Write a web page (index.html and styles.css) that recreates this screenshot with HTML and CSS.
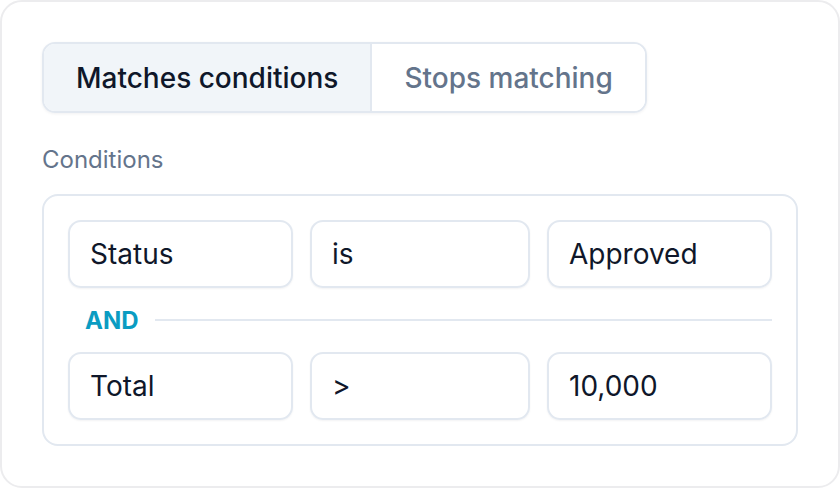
FILE: index.html
```html
<!DOCTYPE html>
<html lang="en">
<head>
    <meta charset="UTF-8">
    <meta name="viewport" content="width=device-width, initial-scale=1.0">
    <title>Trigger Conditions</title>
    <link rel="stylesheet" href="styles.css">
</head>
<body>
    <div class="card">
        <div class="segmented">
            <button class="segment active">Matches conditions</button>
            <button class="segment">Stops matching</button>
        </div>

        <div class="section-label">Conditions</div>

        <div class="conditions">
            <div class="condition-row">
                <div class="field">Status</div>
                <div class="field">is</div>
                <div class="field">Approved</div>
            </div>

            <div class="joiner">
                <span class="joiner-label">AND</span>
                <span class="joiner-line"></span>
            </div>

            <div class="condition-row">
                <div class="field">Total</div>
                <div class="field">&gt;</div>
                <div class="field">10,000</div>
            </div>
        </div>
    </div>
</body>
</html>
```

FILE: styles.css
```css
html, body {
    margin: 0;
    padding: 0;
    background: #ffffff;
}
body {
    font-family: Inter, "Noto Sans", sans-serif;
    color: #0f172a;
}
.card {
    width: 840px;
    height: 488px;
    box-sizing: border-box;
    border: 2px solid #ececee;
    border-radius: 22px;
    padding: 40px;
    background: #ffffff;
}
.segmented {
    display: inline-flex;
    height: 71px;
    box-sizing: border-box;
    border: 2px solid #e2e8f0;
    border-radius: 13px;
    overflow: hidden;
    box-shadow: 0 1px 3px rgba(15, 23, 42, 0.06);
}
.segment {
    font-family: inherit;
    font-size: 28px;
    font-weight: 500;
    color: #64748b;
    background: #ffffff;
    border: none;
    padding: 0 32px;
    margin: 0;
    cursor: pointer;
}
.segment.active {
    background: #f1f5f9;
    color: #0f172a;
    border-right: 2px solid #e2e8f0;
}
.section-label {
    margin-top: 33px;
    font-size: 24px;
    color: #64748b;
    line-height: 28px;
}
.conditions {
    margin-top: 20px;
    border: 2px solid #e2e8f0;
    border-radius: 16px;
    padding: 24px;
}
.condition-row {
    display: grid;
    grid-template-columns: 225px 1fr 225px;
    gap: 17px;
}
.field {
    height: 68px;
    box-sizing: border-box;
    border: 2px solid #e2e8f0;
    border-radius: 13px;
    padding: 0 20px;
    display: flex;
    align-items: center;
    font-size: 28px;
    box-shadow: 0 1px 2px rgba(15, 23, 42, 0.05);
}
.joiner {
    display: flex;
    align-items: center;
    height: 64px;
    padding-left: 17px;
}
.joiner-label {
    font-size: 24px;
    font-weight: 700;
    color: #0a9cc2;
    margin-right: 16px;
}
.joiner-line {
    flex: 1;
    height: 2px;
    background: #e2e8f0;
}
```
